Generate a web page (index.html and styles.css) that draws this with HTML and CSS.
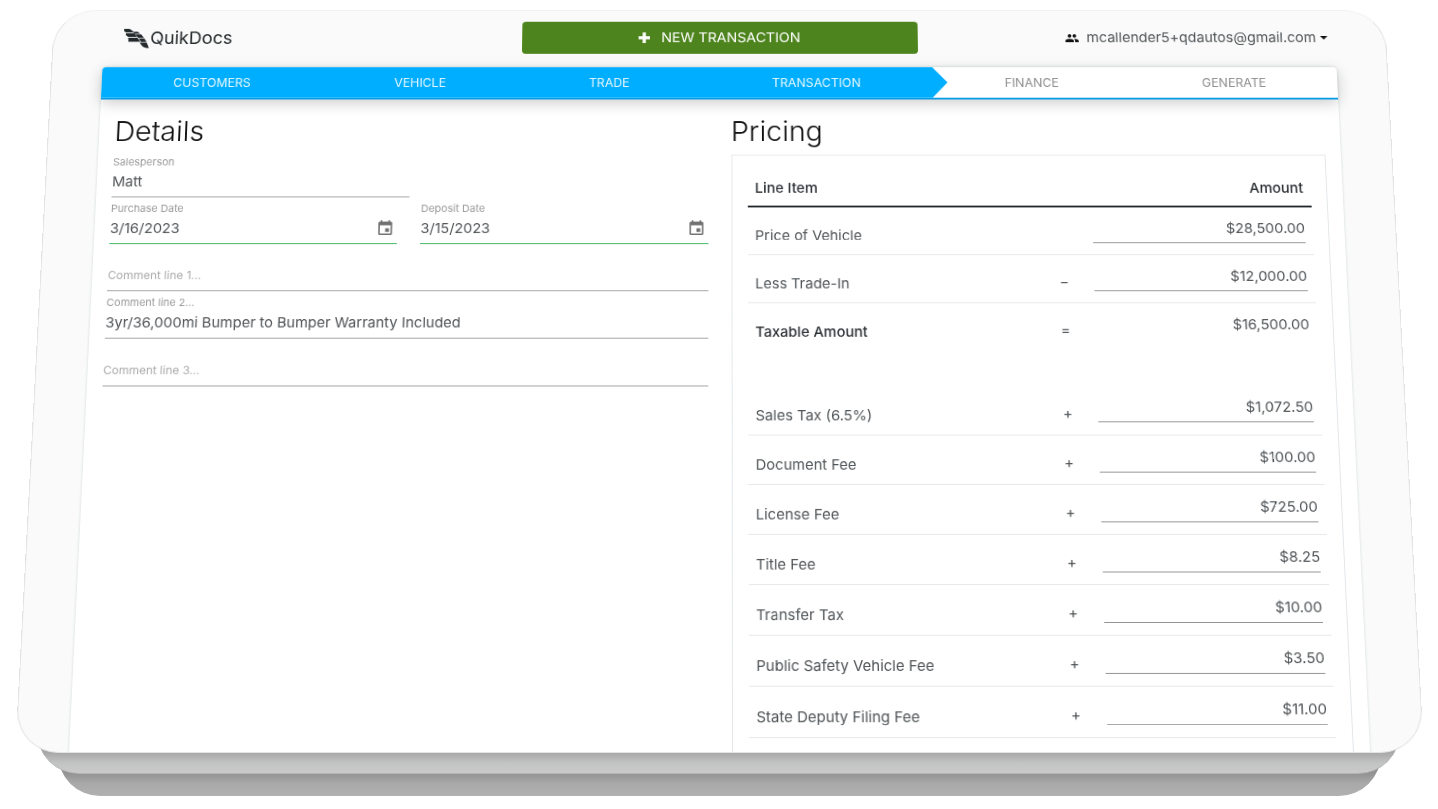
FILE: index.html
```html
<!DOCTYPE html>
<html lang="en">
<head>
<meta charset="utf-8">
<meta name="viewport" content="width=device-width, initial-scale=1">
<title>QuikDocs – Transaction</title>
<link rel="stylesheet" href="styles.css">
</head>
<body>
<div class="stage">
  <div class="layer layer-back"></div>
  <div class="layer layer-middle"></div>
  <div class="screen">
    <header class="topbar">
      <a class="brand" href="#">
        <svg class="brand-mark" viewBox="0 0 27 22" aria-hidden="true">
          <path d="M0 0h4c2 0 3 .6 4 1.600L10.500 4H2L0 2.500zM9 3.200h5.500l2.500 2.300h-5.500zM2 5h9l3 4H4.500L2 7zM12.200 6.200h6l3 3.800h-6zM4.500 10h10l3 4.500H5V12zM15.800 10.800h6l2.500 4h-6zM17 15.500h7.500L27 21.500c-3.500 0-5.500-.5-7.500-2.500z"/>
        </svg>
        <span>QuikDocs</span>
      </a>
      <button class="new-button" type="button">
        <svg class="plus" viewBox="0 0 12 12" aria-hidden="true"><path d="M4.300 0h3.400v4.300H12v3.400H7.700V12H4.300V7.700H0V4.300h4.300z"/></svg>
        NEW TRANSACTION
      </button>
      <button class="account" type="button">
        <svg class="people" viewBox="1 5 22 14" aria-hidden="true"><path d="M16 11c1.660 0 2.990-1.340 2.990-3S17.660 5 16 5s-3 1.340-3 3 1.340 3 3 3zm-8 0c1.660 0 2.990-1.340 2.990-3S9.660 5 8 5 5 6.340 5 8s1.340 3 3 3zm0 2c-2.330 0-7 1.170-7 3.500V19h14v-2.500c0-2.330-4.670-3.500-7-3.500zm8 0c-.29 0-.62.02-.97.05 1.160.84 1.970 1.970 1.970 3.450V19h6v-2.500c0-2.330-4.670-3.500-7-3.500z"/></svg>
        <span class="email">mcallender5+qdautos@gmail.com</span>
        <svg class="caret" viewBox="0 0 8 4" aria-hidden="true"><path d="M0 0h8L4 4z"/></svg>
      </button>
    </header>
    <main class="sheet">
      <nav class="steps">
        <a class="step step-customers done" href="#">CUSTOMERS</a>
        <a class="step step-vehicle done" href="#">VEHICLE</a>
        <a class="step step-trade done" href="#">TRADE</a>
        <a class="step step-transaction done current" href="#" aria-current="step">TRANSACTION</a>
        <a class="step step-finance" href="#">FINANCE</a>
        <a class="step step-generate" href="#">GENERATE</a>
      </nav>
      <div class="columns">
        <section class="details">
          <h1>Details</h1>
          <div class="field half">
            <label for="salesperson">Salesperson</label>
            <input id="salesperson" type="text" value="Matt">
          </div>
          <div class="dates">
            <div class="field valid">
              <label for="purchase">Purchase Date</label>
              <div class="date-line">
                <input id="purchase" type="text" value="3/16/2023">
                <button type="button" aria-label="Pick purchase date"><svg viewBox="3 1 18 20"><path d="M17 12h-5v5h5v-5zM16 1v2H8V1H6v2H5c-1.110 0-1.990.9-1.990 2L3 19c0 1.100.89 2 2 2h14c1.100 0 2-.9 2-2V5c0-1.100-.9-2-2-2h-1V1h-2zm3 18H5V8h14v11z"/></svg></button>
              </div>
            </div>
            <div class="field valid">
              <label for="deposit">Deposit Date</label>
              <div class="date-line">
                <input id="deposit" type="text" value="3/15/2023">
                <button type="button" aria-label="Pick deposit date"><svg viewBox="3 1 18 20"><path d="M17 12h-5v5h5v-5zM16 1v2H8V1H6v2H5c-1.110 0-1.990.9-1.990 2L3 19c0 1.100.89 2 2 2h14c1.100 0 2-.9 2-2V5c0-1.100-.9-2-2-2h-1V1h-2zm3 18H5V8h14v11z"/></svg></button>
              </div>
            </div>
          </div>
          <div class="field empty">
            <input type="text" placeholder="Comment line 1..." aria-label="Comment line 1">
          </div>
          <div class="field">
            <label for="comment2">Comment line 2...</label>
            <input id="comment2" type="text" value="3yr/36,000mi Bumper to Bumper Warranty Included">
          </div>
          <div class="field empty">
            <input type="text" placeholder="Comment line 3..." aria-label="Comment line 3">
          </div>
        </section>
        <section class="pricing">
          <h1>Pricing</h1>
          <div class="price-card">
            <table>
              <thead>
                <tr><th class="item">Line Item</th><th class="sign"></th><th class="amount">Amount</th></tr>
              </thead>
              <tbody>
                <tr><td>Price of Vehicle</td><td class="sign"></td><td><input type="text" aria-label="Price of Vehicle" value="$28,500.00"></td></tr>
                <tr><td>Less Trade-In</td><td class="sign">−</td><td><input type="text" aria-label="Less Trade-In" value="$12,000.00"></td></tr>
                <tr class="total"><td>Taxable Amount</td><td class="sign">=</td><td><output>$16,500.00</output></td></tr>
                <tr class="spacer"><td colspan="3"></td></tr>
                <tr><td>Sales Tax (6.5%)</td><td class="sign">+</td><td><input type="text" aria-label="Sales Tax" value="$1,072.50"></td></tr>
                <tr><td>Document Fee</td><td class="sign">+</td><td><input type="text" aria-label="Document Fee" value="$100.00"></td></tr>
                <tr><td>License Fee</td><td class="sign">+</td><td><input type="text" aria-label="License Fee" value="$725.00"></td></tr>
                <tr><td>Title Fee</td><td class="sign">+</td><td><input type="text" aria-label="Title Fee" value="$8.25"></td></tr>
                <tr><td>Transfer Tax</td><td class="sign">+</td><td><input type="text" aria-label="Transfer Tax" value="$10.00"></td></tr>
                <tr><td>Public Safety Vehicle Fee</td><td class="sign">+</td><td><input type="text" aria-label="Public Safety Vehicle Fee" value="$3.50"></td></tr>
                <tr><td>State Deputy Filing Fee</td><td class="sign">+</td><td><input type="text" aria-label="State Deputy Filing Fee" value="$11.00"></td></tr>
              </tbody>
            </table>
          </div>
        </section>
      </div>
    </main>
  </div>
</div>
</body>
</html>
```
FILE: styles.css
```css
* { box-sizing: border-box; }

body {
  margin: 0;
  background: #fff;
  color: #505457;
  font-family: Inter, "Liberation Sans", sans-serif;
  font-size: 15px;
  line-height: 24px;
}

button, input {
  margin: 0;
  padding: 0;
  border: 0;
  background: none;
  color: inherit;
  font: inherit;
}

a { color: inherit; text-decoration: none; }
svg { display: block; fill: currentColor; }

.stage {
  position: relative;
  display: flex;
  flex-direction: column;
  justify-content: flex-end;
  height: 100vh;
  padding: 0 14px 56px 15px;
  overflow: hidden;
}

/* Cards stacked below the screen */
.layer {
  position: absolute;
  height: 120px;
  border-radius: 42px;
}
.layer-middle {
  right: 38px;
  bottom: 35px;
  left: 37px;
  border-bottom: 1px solid #b4b4b4;
  background: linear-gradient(#a6a6a6 98px, #c2c3c3 109px, #cacaca);
}
.layer-back {
  right: 57px;
  bottom: 13px;
  left: 58px;
  background: linear-gradient(#929292 97px, #a8a8a8 107px, #b1b1b1);
}

/* The screen leans back around its bottom edge */
.screen {
  position: relative;
  display: flex;
  flex: none;
  flex-direction: column;
  height: calc(100vh - 18px);
  overflow: hidden;
  border: 1px solid #e3e3e3;
  border-top-color: #f2f2f2;
  border-radius: 44px;
  background: #fafafa;
  transform: perspective(1400px) rotateX(6deg);
  transform-origin: 50% 100%;
}

.topbar {
  display: grid;
  grid-template-columns: 1fr 418px 1fr;
  align-items: center;
  padding: 12px 61px 15px;
}

.brand {
  display: flex;
  align-items: center;
  gap: 1px;
  padding: 1px 0 0 13px;
  color: #24292b;
  font-size: 19px;
}
.brand-mark { width: 27px; height: 22px; }

.new-button {
  display: flex;
  align-items: center;
  justify-content: center;
  gap: 12px;
  height: 36px;
  border-radius: 4px;
  background: #4d841d;
  color: #fff;
}
.plus { width: 12px; height: 12px; }

.account {
  display: flex;
  align-items: center;
  justify-self: end;
}
.email { padding: 0 4px 0 8px; }
.people { width: 14px; height: 9px; color: #111; }
.caret { width: 8px; height: 4px; color: #111; }

.sheet {
  flex: 1;
  margin: 0 53px;
  border-radius: 4px 4px 0 0;
  background: #fff;
  box-shadow: 0 0 3px #ccd2d6;
}

.steps {
  display: flex;
  height: 36px;
  border-bottom: 2px solid #069be6;
  border-radius: 4px 4px 0 0;
  background: #fff;
  box-shadow: 0 4px 16px #0003;
  color: #8d8d8d;
  font-size: 13px;
  line-height: 34px;
  text-align: center;
}
.step { position: relative; }
.done { background: #00aeff; color: #e6f7ff; }
.step-customers { flex: 232; border-radius: 4px 0 0 0; }
.step-vehicle { flex: 206; }
.step-trade { flex: 192; }
.step-transaction { flex: 244; }
.step-finance { flex: 209; }
.step-generate { flex: 217; }
.current::after {
  content: "";
  position: absolute;
  top: 0;
  left: 100%;
  width: 16px;
  height: 100%;
  background: #00aeff;
  clip-path: polygon(0 0, 100% 50%, 0 100%);
}

.columns {
  display: grid;
  grid-template-columns: 1fr 1fr;
  gap: 24px;
  padding: 16px;
}

h1 {
  margin: 0;
  color: #111;
  font-size: 30px;
  font-weight: 300;
  line-height: 38px;
}

.field {
  display: flex;
  flex-direction: column;
  justify-content: flex-end;
  height: 51px;
  border-bottom: 1px solid #a0a0a0;
}
.details h1 { margin-bottom: 3px; }
.field label { color: #999; font-size: 11px; line-height: 16px; }
.field input { width: 100%; height: 28px; }
.field label + input, .date-line { height: 30px; padding-bottom: 4px; }
.field.empty input { height: 34px; font-size: 12px; }
.field.valid { border-color: #34b256; }
.field input::placeholder { color: #aaa; opacity: 1; }
.half { width: 50%; }
.dates { display: grid; grid-template-columns: 1fr 1fr; gap: 24px; }
.date-line { display: flex; align-items: center; }
.date-line button { padding-right: 5px; color: #707070; }
.date-line svg { width: 15px; height: 16px; }

.pricing h1 { margin-bottom: 7px; }
.price-card {
  height: 100vh;
  padding: 16px;
  border: 1px solid #e3e7ea;
}

table { width: 100%; border-collapse: collapse; table-layout: fixed; }
th {
  height: 40px;
  padding: 1px 8px 0;
  border-bottom: 2px solid #22272b;
  color: #2a2f33;
  font-weight: 500;
  text-align: left;
}
th.sign { width: 48px; }
th.amount { width: 237px; text-align: right; }
td {
  height: 52px;
  padding: 8px;
  border-bottom: 1px solid #e5e8ea;
  vertical-align: bottom;
}
td.sign { padding: 8px 0 10px 2px; text-align: center; }
td:last-child { vertical-align: top; }
td input, td output { display: block; width: 100%; height: 31px; text-align: right; }
td input { padding-bottom: 1px; border-bottom: 1px solid #929292; }
td output { line-height: 29px; }
.total td, .spacer td { border-bottom: 0; }
.total td:first-child { color: #2a2f33; font-weight: 500; }
.spacer td { height: 37px; padding: 0; }
```
